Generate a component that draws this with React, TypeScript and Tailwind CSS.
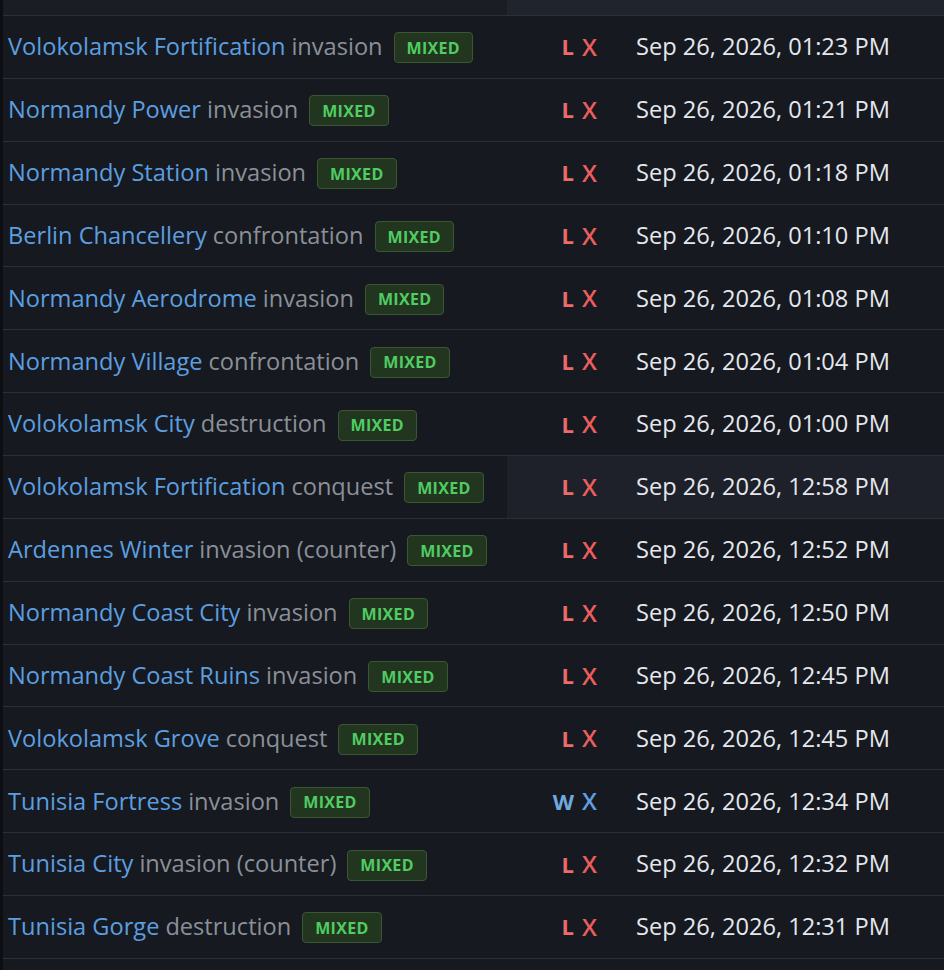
import React from "react";

// ============================================
// Match history rows
// ============================================

type Result = "L" | "W";

interface MatchRow {
    map: string;
    mode: string;
    result: Result;
    date: string;
    highlight?: boolean;
}

const ROWS: MatchRow[] = [
    { map: "Volokolamsk Fortification", mode: "invasion", result: "L", date: "Sep 26, 2026, 01:23 PM" },
    { map: "Normandy Power", mode: "invasion", result: "L", date: "Sep 26, 2026, 01:21 PM" },
    { map: "Normandy Station", mode: "invasion", result: "L", date: "Sep 26, 2026, 01:18 PM" },
    { map: "Berlin Chancellery", mode: "confrontation", result: "L", date: "Sep 26, 2026, 01:10 PM" },
    { map: "Normandy Aerodrome", mode: "invasion", result: "L", date: "Sep 26, 2026, 01:08 PM" },
    { map: "Normandy Village", mode: "confrontation", result: "L", date: "Sep 26, 2026, 01:04 PM" },
    { map: "Volokolamsk City", mode: "destruction", result: "L", date: "Sep 26, 2026, 01:00 PM" },
    { map: "Volokolamsk Fortification", mode: "conquest", result: "L", date: "Sep 26, 2026, 12:58 PM", highlight: true },
    { map: "Ardennes Winter", mode: "invasion (counter)", result: "L", date: "Sep 26, 2026, 12:52 PM" },
    { map: "Normandy Coast City", mode: "invasion", result: "L", date: "Sep 26, 2026, 12:50 PM" },
    { map: "Normandy Coast Ruins", mode: "invasion", result: "L", date: "Sep 26, 2026, 12:45 PM" },
    { map: "Volokolamsk Grove", mode: "conquest", result: "L", date: "Sep 26, 2026, 12:45 PM" },
    { map: "Tunisia Fortress", mode: "invasion", result: "W", date: "Sep 26, 2026, 12:34 PM" },
    { map: "Tunisia City", mode: "invasion (counter)", result: "L", date: "Sep 26, 2026, 12:32 PM" },
    { map: "Tunisia Gorge", mode: "destruction", result: "L", date: "Sep 26, 2026, 12:31 PM" },
];

function Row({ row }: { row: MatchRow }) {
    const isWin = row.result === "W";
    return (
        <div className="flex h-[62.87px] border-b border-[#2a2f38]">
            <div className="w-[504px] flex items-center pl-[5px] whitespace-nowrap">
                <span className="text-[#5c9fe0]">{row.map}</span>
                <span className="text-[#8b9098] ml-[6px]">{row.mode}</span>
                <span className="ml-[11px] mt-[2px] inline-flex items-center h-[31px] px-[12px] rounded-[4px] border border-[#3a5734] bg-[#22351f] text-[#4fcc62] text-[16px] font-bold tracking-[0.02em] leading-none">
                    MIXED
                </span>
            </div>
            <div className={`flex-1 flex items-center ${row.highlight ? "bg-[#1e2129]" : ""}`}>
                <div className="w-[90px] flex justify-end items-center gap-[8px]">
                    <span className={`font-bold text-[22px] ${isWin ? "text-[#6ea9e0]" : "text-[#ec6a6a]"}`}>{row.result}</span>
                    <span className={`font-semibold text-[24px] ${isWin ? "text-[#5e9fe0]" : "text-[#ec5d5d]"}`}>X</span>
                </div>
                <div className="ml-[39px] text-[#e4e8ee] whitespace-nowrap">{row.date}</div>
            </div>
        </div>
    );
}

export default function App() {
    return (
        <div
            className="w-[944px] h-[970px] overflow-hidden bg-[#16191f] flex text-[23.6px]"
            style={{ fontFamily: '"Open Sans", "Noto Sans", sans-serif' }}
        >
            <div className="w-[3px] bg-[#0c0e12] shrink-0" />
            <div className="flex-1">
                {/* header strip */}
                <div className="flex h-[16px] border-b border-[#2a2f38]">
                    <div className="w-[504px] bg-[#1a1d24]" />
                    <div className="flex-1 bg-[#20242c]" />
                </div>
                {ROWS.map((r, i) => (
                    <Row key={i} row={r} />
                ))}
            </div>
        </div>
    );
}
